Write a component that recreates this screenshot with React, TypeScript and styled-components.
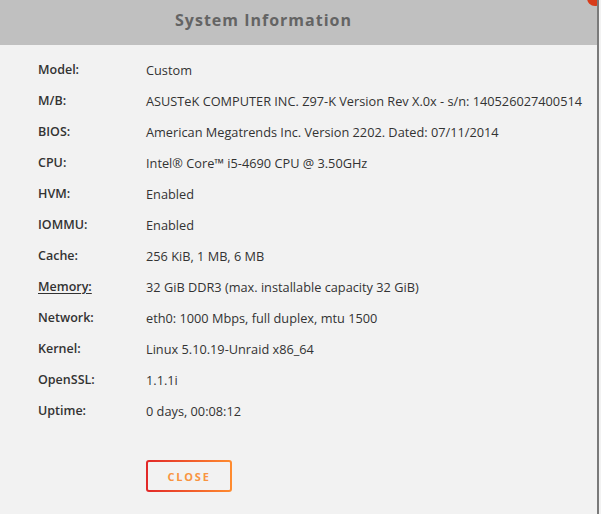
import React from "react";
import styled, { createGlobalStyle } from "styled-components";

const GlobalStyle = createGlobalStyle`
  html, body {
    margin: 0;
    padding: 0;
    background: #f2f2f2;
  }
  body {
    font-family: "Open Sans", "Liberation Sans", sans-serif;
  }
`;

const rows: { label: string; value: string; link?: boolean }[] = [
  { label: "Model:", value: "Custom" },
  { label: "M/B:", value: "ASUSTeK COMPUTER INC. Z97-K Version Rev X.0x - s/n: 140526027400514" },
  { label: "BIOS:", value: "American Megatrends Inc. Version 2202. Dated: 07/11/2014" },
  { label: "CPU:", value: "Intel® Core™ i5-4690 CPU @ 3.50GHz" },
  { label: "HVM:", value: "Enabled" },
  { label: "IOMMU:", value: "Enabled" },
  { label: "Cache:", value: "256 KiB, 1 MB, 6 MB" },
  { label: "Memory:", value: "32 GiB DDR3 (max. installable capacity 32 GiB)", link: true },
  { label: "Network:", value: "eth0: 1000 Mbps, full duplex, mtu 1500" },
  { label: "Kernel:", value: "Linux 5.10.19-Unraid x86_64" },
  { label: "OpenSSL:", value: "1.1.1i" },
  { label: "Uptime:", value: "0 days, 00:08:12" },
];

const Dialog = styled.div`
  position: relative;
  width: 599px;
  height: 514px;
  background: #f2f2f2;
  border-right: 2px solid #7a7a7a;
  overflow: hidden;
  box-sizing: border-box;
`;

const Header = styled.div`
  height: 45px;
  background: #c0c0c0;
  display: flex;
  align-items: center;
  justify-content: center;
  padding: 0 70px 5px 0;
  box-sizing: border-box;
`;

const Title = styled.h2`
  margin: 0;
  font-size: 16px;
  font-weight: 700;
  letter-spacing: 1px;
  color: #646464;
`;

const CornerDot = styled.div`
  position: absolute;
  top: -10px;
  right: -6px;
  width: 16px;
  height: 16px;
  border-radius: 50%;
  background: #d83c1a;
`;

const Body = styled.div`
  padding: 9px 0 0 38px;
`;

const Grid = styled.div`
  display: grid;
  grid-template-columns: 108px 1fr;
  grid-auto-rows: 31px;
  align-items: center;
  color: #333;
`;

const Label = styled.span<{ $link?: boolean }>`
  font-size: 12.5px;
  font-weight: 600;
  text-decoration: ${(p) => (p.$link ? "underline" : "none")};
  text-underline-offset: 2px;
`;

const Value = styled.span`
  font-size: 12.75px;
  white-space: nowrap;
`;

const Footer = styled.div`
  padding: 34px 0 0 146px;
`;

const CloseButton = styled.button`
  width: 86px;
  height: 32px;
  border: 2px solid transparent;
  border-radius: 3px;
  background: linear-gradient(#f2f2f2, #f2f2f2) padding-box,
    linear-gradient(90deg, #e22828, #ff8c2f) border-box;
  color: #f99440;
  font-family: "Open Sans", "Liberation Sans", sans-serif;
  font-size: 11px;
  font-weight: 700;
  letter-spacing: 1.8px;
  cursor: pointer;
`;

export default function App() {
  return (
    <>
      <GlobalStyle />
      <Dialog>
        <Header>
          <Title>System Information</Title>
        </Header>
        <CornerDot />
        <Body>
          <Grid>
            {rows.map((r) => (
              <React.Fragment key={r.label}>
                <Label $link={r.link}>{r.label}</Label>
                <Value>{r.value}</Value>
              </React.Fragment>
            ))}
          </Grid>
        </Body>
        <Footer>
          <CloseButton>CLOSE</CloseButton>
        </Footer>
      </Dialog>
    </>
  );
}
